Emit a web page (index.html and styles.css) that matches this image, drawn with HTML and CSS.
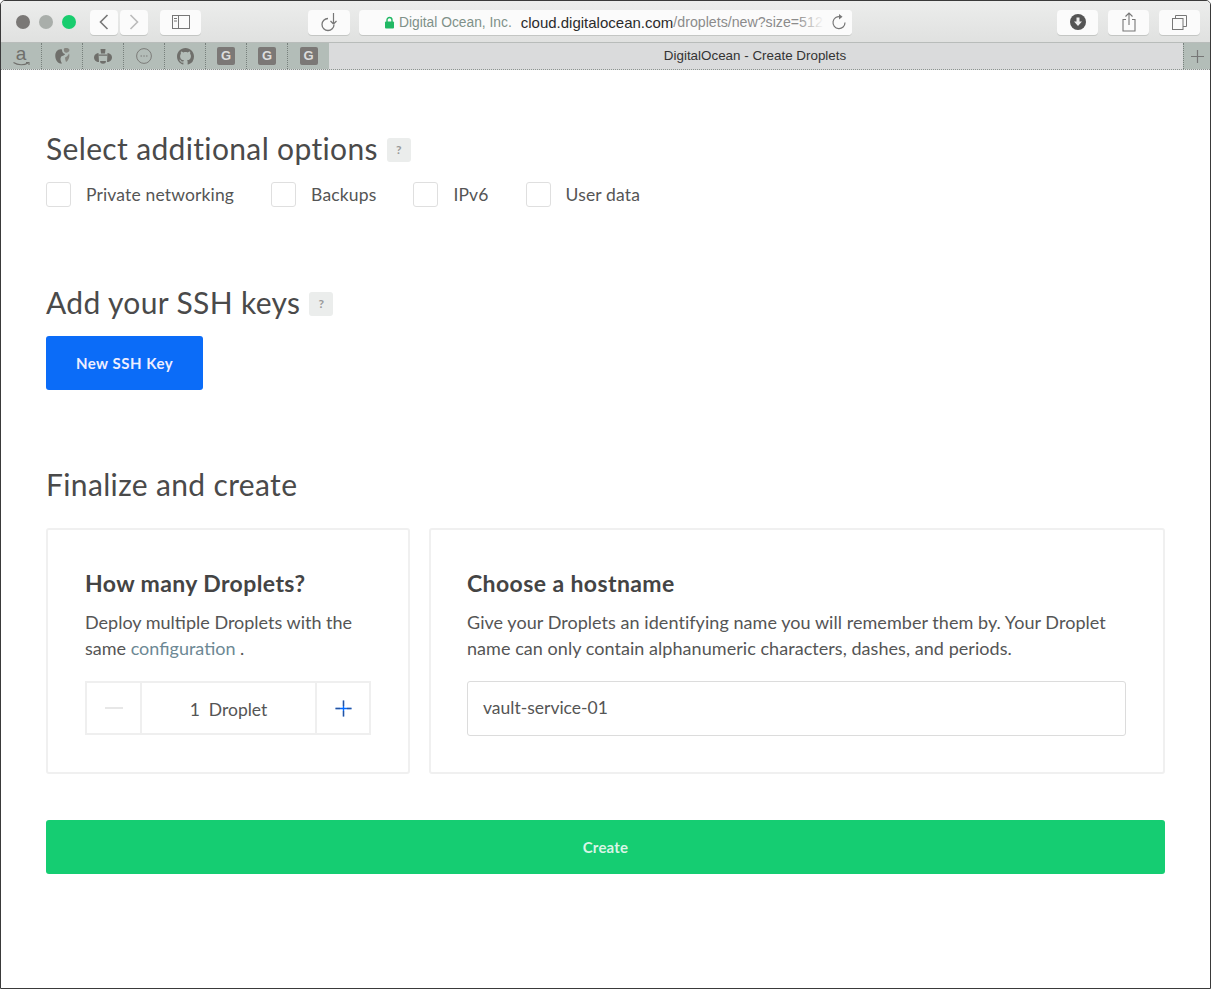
FILE: index.html
```html
<!DOCTYPE html>
<html lang="en">
<head>
    <meta charset="UTF-8">
    <title>DigitalOcean - Create Droplets</title>
    <link rel="stylesheet" href="styles.css">
</head>
<body>
    <div class="window">
        <div class="toolbar">
            <div class="lights">
                <span class="light light-close"></span>
                <span class="light light-min"></span>
                <span class="light light-max"></span>
            </div>
            <div class="nav-group">
                <button class="tool-btn nav-btn">
                    <svg width="12" height="18" viewBox="0 0 12 18"><path d="M9.5 2 L2.5 9 L9.5 16" fill="none" stroke="#777" stroke-width="1.6"/></svg>
                </button>
                <button class="tool-btn nav-btn">
                    <svg width="12" height="18" viewBox="0 0 12 18"><path d="M2.5 2 L9.5 9 L2.5 16" fill="none" stroke="#bbb" stroke-width="1.6"/></svg>
                </button>
            </div>
            <button class="tool-btn sidebar-btn">
                <svg width="18" height="14" viewBox="0 0 18 14"><rect x="0.5" y="0.5" width="17" height="13" fill="none" stroke="#777"/><path d="M6.5 0.5 V13.5 M2 3.5 H5 M2 6 H5" fill="none" stroke="#777"/></svg>
            </button>
            <button class="tool-btn reader-btn">
                <svg width="20" height="20" viewBox="0 0 20 20"><path d="M9 6.5 A6 6 0 1 0 15 12.5" fill="none" stroke="#777" stroke-width="1.3"/><path d="M14.5 1 V12 M14.5 12 L11.5 9 M14.5 12 L17.5 9" fill="none" stroke="#777" stroke-width="1.2"/></svg>
            </button>
            <div class="address">
                <svg class="lock" width="11" height="13" viewBox="0 0 11 13"><path d="M3 6 V4 A2.5 2.5 0 0 1 8 4 V6" fill="none" stroke="#20b864" stroke-width="1.4"/><rect x="1" y="5.5" width="9" height="7" rx="1" fill="#20b864"/></svg>
                <span class="addr-org">Digital Ocean, Inc.</span>
                <span class="addr-host">cloud.digitalocean.com</span><span class="addr-path">/droplets/new?size=512</span>
                <span class="addr-fade"></span>
                <svg class="reload" width="16" height="18" viewBox="0 0 16 18"><path d="M9.5 3.8 A6 6 0 1 0 14 9.5" fill="none" stroke="#777" stroke-width="1.2"/><path d="M8 1 L11.5 3.8 L8 6.5 Z" fill="#777"/></svg>
            </div>
            <div class="tool-right">
                <button class="tool-btn right-btn">
                    <svg width="16" height="16" viewBox="0 0 16 16"><circle cx="8" cy="8" r="8" fill="#555"/><path d="M6.5 3.5 H9.5 V7.5 H12 L8 12 L4 7.5 H6.5 Z" fill="#eee"/></svg>
                </button>
                <button class="tool-btn right-btn">
                    <svg width="14" height="20" viewBox="0 0 14 20"><path d="M4 7.5 H1 V19 H13 V7.5 H10" fill="none" stroke="#777" stroke-width="1.1"/><path d="M7 13 V1.5 M3.5 4.5 L7 1 L10.5 4.5" fill="none" stroke="#777" stroke-width="1.1"/></svg>
                </button>
                <button class="tool-btn right-btn">
                    <svg width="15" height="15" viewBox="0 0 15 15"><rect x="0.5" y="3.5" width="10.5" height="11" fill="none" stroke="#777"/><path d="M3.5 3.5 V0.5 H14.5 V11.5 H11" fill="none" stroke="#777"/></svg>
                </button>
            </div>
        </div>
        <div class="tabbar">
            <div class="favs">
                <div class="fav fav-amazon">
                    <span class="fav-a">a</span>
                    <svg width="17" height="4" viewBox="0 0 17 4"><path d="M0.5 0.5 C5 3.5 11 3.5 15 1 M13 0.5 H16 V3" fill="none" stroke="#6f6f6b" stroke-width="1.1"/></svg>
                </div>
                <div class="fav">
                    <svg width="17" height="18" viewBox="0 0 17 18"><path d="M8 2.5 C4 1.5 1 5 1.3 9.5 C1.6 14 4.5 17 8 16.5 C6.5 14 6 12 7 10 C7.5 8.5 10.5 9 11 7 C9 6.5 8 5 8 2.5 Z" fill="#6f6f6b"/><path d="M10 1.5 C12 0.5 15 1 15.5 3 C15 5.5 12 6.5 10.5 5 C10 4 9.5 2.5 10 1.5 Z M11 10.5 C13 9.5 14.5 8 15 6.5 C16 9 15 13 12 15 C11.5 13.5 11 12 11 10.5 Z" fill="#85857f"/></svg>
                </div>
                <div class="fav">
                    <svg width="20" height="17" viewBox="0 0 20 17"><path d="M7.5 1 H12.5 L12 5.5 H8 Z M5.5 6.5 H14.5 V7.8 H5.5 Z" fill="#6f6f6b"/><path d="M1 9 C1.5 6 4 5 5.5 5 L6 14 C3 14 1 12.5 1 9 Z M19 9 C18.5 6 16 5 14.5 5 L14 14 C17 14 19 12.5 19 9 Z M7 13 H13 L12.5 15 C11 16 9 16 7.5 15 Z" fill="#6f6f6b"/></svg>
                </div>
                <div class="fav">
                    <svg width="16" height="16" viewBox="0 0 16 16"><circle cx="8" cy="8" r="7.4" fill="none" stroke="#7b7b78"/><path d="M4.5 8 H6 M7.3 8 H8.8 M10 8 H11.5" stroke="#7b7b78"/></svg>
                </div>
                <div class="fav">
                    <svg width="17" height="17" viewBox="0 0 16 16"><path fill="#6f6f6b" d="M8 0C3.58 0 0 3.58 0 8c0 3.54 2.29 6.53 5.47 7.59.4.07.55-.17.55-.38 0-.19-.01-.82-.01-1.49-2.01.37-2.53-.49-2.69-.94-.09-.23-.48-.94-.82-1.13-.28-.15-.68-.52-.01-.53.63-.01 1.08.58 1.23.82.72 1.21 1.87.87 2.33.66.07-.52.28-.87.51-1.07-1.78-.2-3.64-.89-3.64-3.95 0-.87.31-1.59.82-2.15-.08-.2-.36-1.02.08-2.12 0 0 .67-.21 2.2.82.64-.18 1.32-.27 2-.27s1.36.09 2 .27c1.53-1.04 2.2-.82 2.2-.82.44 1.1.16 1.92.08 2.12.51.56.82 1.27.82 2.15 0 3.07-1.87 3.75-3.65 3.95.29.25.54.73.54 1.48 0 1.07-.01 1.93-.01 2.2 0 .21.15.46.55.38A8.01 8.01 0 0 0 16 8c0-4.42-3.58-8-8-8z"/></svg>
                </div>
                <div class="fav"><span class="fav-g">G</span></div>
                <div class="fav"><span class="fav-g">G</span></div>
                <div class="fav"><span class="fav-g">G</span></div>
            </div>
            <div class="tab-title">DigitalOcean - Create Droplets</div>
            <div class="tab-add">
                <svg width="15" height="15" viewBox="0 0 15 15"><path d="M7.5 1 V14 M1 7.5 H14" stroke="#777" stroke-width="1.2"/></svg>
            </div>
        </div>

        <div class="content">
            <section class="options">
                <h2 class="section-title">Select additional options <span class="help">?</span></h2>
                <div class="check-row">
                    <label class="check"><span class="box"></span>Private networking</label>
                    <label class="check"><span class="box"></span>Backups</label>
                    <label class="check"><span class="box"></span>IPv6</label>
                    <label class="check"><span class="box"></span>User data</label>
                </div>
            </section>

            <section class="ssh">
                <h2 class="section-title">Add your SSH keys <span class="help">?</span></h2>
                <button class="btn-blue">New SSH Key</button>
            </section>

            <section class="finalize">
                <h2 class="section-title">Finalize and create</h2>
                <div class="cards">
                    <div class="card card-count">
                        <h3>How many Droplets?</h3>
                        <p>Deploy multiple Droplets with the<br><span>same</span> <span class="link">configuration</span> <span>.</span></p>
                        <div class="stepper">
                            <div class="step step-minus">
                                <svg width="18" height="2" viewBox="0 0 18 2"><path d="M0 1 H18" stroke="#ddd" stroke-width="1.4"/></svg>
                            </div>
                            <div class="step-value">1&nbsp; Droplet</div>
                            <div class="step step-plus">
                                <svg width="17" height="17" viewBox="0 0 17 17"><path d="M8.5 0.5 V16.5 M0.5 8.5 H16.5" stroke="#0069ff" stroke-width="1.4"/><path d="M8.5 0.5 V6 M8.5 11 V16.5 M0.5 8.5 H5 M12 8.5 H16.5" stroke="#445" stroke-width="1.4" opacity="0.55"/></svg>
                            </div>
                        </div>
                    </div>
                    <div class="card card-host">
                        <h3>Choose a hostname</h3>
                        <p>Give your Droplets an identifying name you will remember them by. Your Droplet name can only contain alphanumeric characters, dashes, and periods.</p>
                        <div class="host-input">vault-service-01</div>
                    </div>
                </div>
                <button class="btn-create">Create</button>
            </section>
        </div>
    </div>
</body>
</html>
```

FILE: styles.css
```css
html, body {
    margin: 0;
    height: 100%;
    background: #fff;
}

body {
    font-family: "Lato", "Open Sans", sans-serif;
    color: #444;
    overflow: hidden;
}

.window {
    height: 989px;
    box-sizing: border-box;
    border: 1px solid #3a3a3a;
    border-radius: 5px 5px 0 0;
    display: flex;
    flex-direction: column;
}

button {
    font-family: inherit;
    border: none;
    cursor: pointer;
    padding: 0;
}

/* browser chrome */
.toolbar {
    height: 42px;
    box-sizing: border-box;
    background: linear-gradient(#ecedec, #e0e1e0);
    border-bottom: 1px solid #b8bcba;
    display: flex;
    align-items: center;
    padding: 1px 0 0 15px;
    border-radius: 4px 4px 0 0;
}

.lights {
    display: flex;
    gap: 9px;
    margin-right: 14px;
}

.light {
    width: 14px;
    height: 14px;
    border-radius: 50%;
}

.light-close { background: #7a7876; }
.light-min { background: #a9aeaa; }
.light-max { background: #18cd6e; }

.tool-btn {
    height: 25px;
    background: #fbfbfb;
    border-radius: 4px;
    box-shadow: 0 1px 0 #c4c6c4;
    display: flex;
    align-items: center;
    justify-content: center;
}

.nav-group {
    display: flex;
    gap: 2px;
    margin-right: 12px;
}

.nav-btn { width: 28px; }
.sidebar-btn { width: 41px; margin-right: 107px; }
.reader-btn { width: 42px; margin-right: 9px; }

.address {
    width: 493px;
    height: 25px;
    box-sizing: border-box;
    background: #fbfbfb;
    border-radius: 4px;
    box-shadow: 0 1px 0 #c4c6c4;
    display: flex;
    align-items: center;
    padding-left: 25px;
    font-family: "Liberation Sans", sans-serif;
    font-size: 14.2px;
    white-space: nowrap;
    overflow: hidden;
    position: relative;
}

.lock { margin-right: 4px; flex: none; }
.addr-org { color: #7f9189; margin-right: 9px; font-size: 13.8px; }
.addr-host { color: #2b2b2b; font-size: 15px; }
.addr-path { color: #8b8b8b; }

.addr-fade {
    position: absolute;
    right: 0;
    top: 0;
    width: 55px;
    height: 25px;
    background: linear-gradient(90deg, rgba(251, 251, 251, 0), #fbfbfb 50%);
}

.reload {
    position: absolute;
    right: 5px;
    top: 3px;
}

.tool-right {
    margin-left: auto;
    display: flex;
    gap: 10px;
    padding-right: 10px;
}

.right-btn { width: 41px; }

.tabbar {
    height: 27px;
    display: flex;
    background: #dadbdc;
    border-bottom: 1px dotted #8c9490;
    box-sizing: border-box;
}

.favs {
    display: flex;
    background: #b3bdb8;
    width: 328px;
    flex: none;
}

.fav {
    width: 41px;
    display: flex;
    align-items: center;
    justify-content: center;
    border-right: 1px dotted #77807c;
    box-sizing: border-box;
}

.fav:last-child { border-right: none; }

.fav-amazon {
    flex-direction: column;
}

.fav-a {
    font-family: "Liberation Sans", sans-serif;
    font-size: 19px;
    line-height: 14px;
    color: #6f6f6b;
    margin-bottom: 1px;
}

.fav-g {
    width: 18px;
    height: 18px;
    border-radius: 2px;
    background: #7b7876;
    color: #ddd;
    font: bold 13px/18px "Liberation Sans", sans-serif;
    text-align: center;
}

.tab-title {
    flex: 1;
    text-align: center;
    font-family: "Liberation Sans", sans-serif;
    font-size: 13.4px;
    line-height: 26px;
    color: #333;
    padding-right: 2px;
}

.tab-add {
    width: 27px;
    flex: none;
    background: #b3bdb8;
    border-left: 1px dotted #77807c;
    box-sizing: border-box;
    display: flex;
    align-items: center;
    justify-content: center;
}

/* page */
.content {
    padding: 0 45px;
    flex: 1;
}

.section-title {
    margin: 0;
    font-size: 30px;
    font-weight: 400;
    letter-spacing: 0.35px;
    line-height: 38px;
    color: #4a4a4a;
    display: flex;
    align-items: center;
    gap: 9px;
}

.help {
    width: 24px;
    height: 24px;
    background: #ebedec;
    border-radius: 3px;
    color: #999;
    font-size: 12px;
    font-weight: 700;
    line-height: 24px;
    text-align: center;
    margin-top: 4px;
    letter-spacing: 0;
}

.options { padding-top: 59px; }

.check-row {
    display: flex;
    gap: 37px;
    margin-top: 15px;
}

.check {
    display: flex;
    align-items: center;
    font-size: 17.5px;
    letter-spacing: 0.15px;
    line-height: 25px;
    color: #555;
}

.box {
    width: 23px;
    height: 23px;
    border: 1px solid #dfdfdf;
    border-radius: 3px;
    margin-right: 15px;
}

.ssh { padding-top: 76px; }

.btn-blue {
    display: block;
    margin-top: 15px;
    width: 157px;
    height: 54px;
    background: #0b6cf8;
    color: #eef;
    border-radius: 3px;
    font-size: 15px;
    font-weight: 700;
    letter-spacing: 0.5px;
}

.finalize { padding-top: 75px; }

.cards {
    display: flex;
    gap: 19px;
    margin-top: 25px;
}

.card {
    box-sizing: border-box;
    height: 246px;
    border: 2px solid #f0f0f0;
    border-radius: 3px;
    padding: 38px 37px 0;
}

.card-count { width: 364px; flex: none; }
.card-host { flex: 1; padding-left: 36px; }

.card h3 {
    margin: 0;
    font-size: 23px;
    font-weight: 700;
    letter-spacing: 0.4px;
    line-height: 30px;
    color: #444;
}

.card p {
    margin: 11px 0 0;
    font-size: 18px;
    line-height: 26px;
    color: #555;
}

.card-host p { letter-spacing: 0.05px; }

.link { color: #6d8894; }

.stepper {
    display: flex;
    height: 54px;
    box-sizing: border-box;
    border: 2px solid #efefef;
    margin-top: 20px;
}

.step {
    flex: none;
    display: flex;
    align-items: center;
    justify-content: center;
}

.step-minus { width: 53px; }
.step-plus { width: 52px; }

.step-value {
    flex: 1;
    border: solid #efefef;
    border-width: 0 2px;
    text-align: center;
    font-size: 17.5px;
    line-height: 53px;
    color: #555;
}

.host-input {
    box-sizing: border-box;
    height: 55px;
    margin-top: 20px;
    border: 1px solid #dcdcdc;
    border-radius: 3px;
    padding-left: 15px;
    font-size: 17.5px;
    line-height: 52px;
    color: #555;
}

.btn-create {
    display: block;
    width: 100%;
    height: 54px;
    margin-top: 46px;
    background: #15cd72;
    color: #d9f5e6;
    border-radius: 3px;
    font-size: 15px;
    font-weight: 700;
    letter-spacing: 0.2px;
}
```
